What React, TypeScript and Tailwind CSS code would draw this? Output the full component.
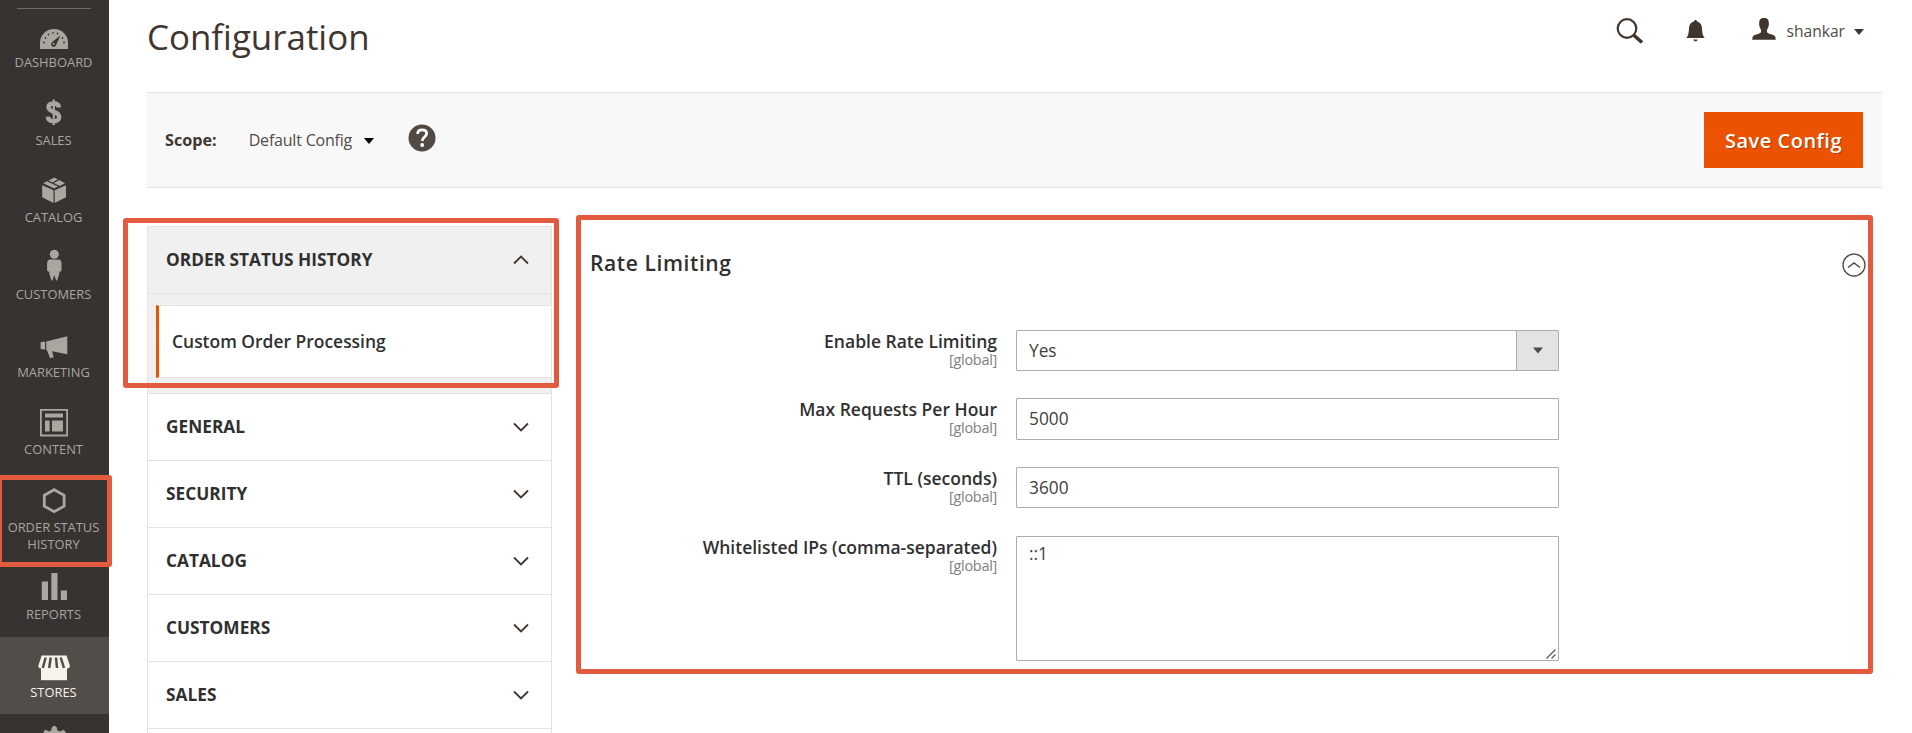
import type { ReactNode } from "react";

function Icon({ children }: { children: ReactNode }) {
  return (
    <svg viewBox="0 0 36 36" className="h-9 w-9 shrink-0" fill="currentColor">
      {children}
    </svg>
  );
}

const icons: Record<string, ReactNode> = {
  dashboard: (
    <Icon>
      <path d="M4 32V26a14 14 0 0 1 28 0v6z" />
      <g className="fill-[#373330]">
        <circle cx="8" cy="25.500" r="0.900" />
        <circle cx="9.500" cy="21" r="0.900" />
        <circle cx="12.500" cy="17.500" r="0.900" />
        <circle cx="17" cy="15.800" r="0.900" />
        <circle cx="21.500" cy="16.500" r="0.900" />
        <circle cx="26.500" cy="21" r="0.900" />
        <circle cx="28" cy="25.500" r="0.900" />
        <path d="M24.500 18.200L16 25.300a2.600 2.600 0 1 0 4.300 2.300z" />
      </g>
      <circle cx="17.700" cy="27" r="1" />
    </Icon>
  ),
  sales: (
    <Icon>
      <path
        d="M23 13.500c-.3-2.900-2.300-4-5.300-4-3 0-5.200 1.300-5.200 3.800 0 5.700 10.700 3.300 10.700 9.600 0 2.800-2.300 4.300-5.500 4.300-3.500 0-5.600-1.600-5.800-4.600"
        fill="none"
        stroke="currentColor"
        strokeWidth="4.400"
      />
      <path d="M16.700 5.500h2.200V31h-2.200z" />
    </Icon>
  ),
  catalog: (
    <Icon>
      <path d="M6.200 14.300l11.300 5v12.700l-11.300-5.700zM30 14.300l-11.300 5v12.700l11.300-5.700z" />
      <path d="M7.300 12.300l3.700-2 11 5.300-3.800 2zM12.500 9.500l5.700-3 3.700 1.700-5.400 3.300zM17.800 12.100l5.500-3.200 5.800 3.300-5.400 2.700z" />
    </Icon>
  ),
  customers: (
    <Icon>
      <circle cx="18.300" cy="5.200" r="4.500" />
      <path d="M14.300 10.500h8c2.200 0 3.200 1.500 3.200 4v7l-1.400 1.500-.8-1v3l-2.200 6.500h-1l-1.800-5.500-1.800 5.500h-1l-2.200-6.500v-3l-.8 1-1.400-1.500v-7c0-2.500 1-4 3.200-4z" />
    </Icon>
  ),
  marketing: (
    <Icon>
      <path d="M31.300 10.300v18l-15.200-3.100 1.500 6.100-3.500 1-3-7.900h-.8v-9zM9.100 15.600v8l-4.500-.6v-6.700z" />
    </Icon>
  ),
  content: (
    <Icon>
      <path d="M4 6h28v27.400H4zM5.800 7.800v23.800h24.400V7.800z" fillRule="evenodd" />
      <path d="M9 10.400h18v4.200H9zM9 17.500h4.600v11.100H9zM16 17.500h11v11.100H16z" />
    </Icon>
  ),
  order: (
    <Icon>
      <path
        d="M18.200 8.700l9.900 5.600v10.800l-9.900 5.600-9.900-5.600V14.300z"
        fill="none"
        stroke="currentColor"
        strokeWidth="2.800"
      />
    </Icon>
  ),
  reports: (
    <Icon>
      <path d="M5.800 13.500H12v18.500H5.800zM15.300 5h6.200v27h-6.200zM24.800 22.500H31v9.500h-6.200z" />
    </Icon>
  ),
  stores: (
    <Icon>
      <path d="M5 21.500h26v12.700H5z" />
      <path d="M5.700 9.500h24.800l3.300 10c.3 2-.8 3-2.800 3H5.200c-2 0-3.100-1-2.800-3z" />
      <path
        d="M9.700 11.500L6.800 22M14.700 11.500L13.200 22M20 11.500L21 22M24.700 11.500L28 22"
        className="stroke-[#524d49]"
        strokeWidth="2.500"
      />
    </Icon>
  ),
  gear: (
    <Icon>
      <path d="M15.800 4.500l1.500-1.500h2l1.500 1.500.7 3 2.500 1 3.500-1.700 2 2v3l-1 2 1 2 3.400 1.300v4H4.200v-4l3.400-1.300 1-2-1-2v-3l2-2 3.500 1.700 2-1z" />
    </Icon>
  ),
};

const menu = [
  { id: "dashboard", label: "DASHBOARD" },
  { id: "sales", label: "SALES" },
  { id: "catalog", label: "CATALOG" },
  { id: "customers", label: "CUSTOMERS" },
  { id: "marketing", label: "MARKETING" },
  { id: "content", label: "CONTENT" },
  { id: "order", label: "ORDER STATUS HISTORY" },
  { id: "reports", label: "REPORTS" },
  { id: "stores", label: "STORES" },
  { id: "gear", label: "" },
];

function itemStyle(id: string) {
  if (id === "stores") return "h-[77px] bg-[#524d49] text-[#f7f3eb]";
  if (id === "order") return "h-[87.500px] text-[#aaa6a0]";
  return "h-[77.400px] text-[#aaa6a0]";
}

function Sidebar() {
  return (
    <aside className="flex h-[733px] w-[109px] shrink-0 flex-col overflow-hidden bg-[#373330]">
      <div className="mt-[7.500px] -mb-px ml-[17px] h-px w-[74px] shrink-0 bg-[#736963]" />
      {menu.map((m) => (
        <div key={m.id} className={`flex shrink-0 flex-col items-center pt-[9px] pr-[2px] ${itemStyle(m.id)}`}>
          {icons[m.id]}
          <span className="mt-[1.800px] w-[104px] text-center text-[12.900px] leading-[17px]">{m.label}</span>
        </div>
      ))}
    </aside>
  );
}

function Caret({ className }: { className: string }) {
  return (
    <svg viewBox="0 0 10 6" className={className} fill="currentColor">
      <path d="M0 0h10L5 6z" />
    </svg>
  );
}

function Chevron({ up }: { up?: boolean }) {
  return (
    <svg viewBox="0 0 16 10" className="h-[10px] w-4" fill="none" stroke="#41362f" strokeWidth="1.800">
      <path d={up ? "M1 8.500l7-7 7 7" : "M1 1.500l7 7 7-7"} />
    </svg>
  );
}

function Header() {
  return (
    <header className="flex h-[92px] items-start justify-between">
      <h1 className="text-[34.900px] leading-[74px] text-[#41362f]">Configuration</h1>
      <div className="mr-[18px] flex h-[62px] items-center text-[#41362f]">
        <svg viewBox="0 0 27 26" className="h-[26px] w-[27px]" fill="none" stroke="currentColor">
          <circle cx="11" cy="10.500" r="9.300" strokeWidth="2.200" />
          <path d="M17.500 17l8.500 7.500" strokeWidth="3.600" />
        </svg>
        <svg viewBox="0 0 19 22" className="ml-[43px] h-[22px] w-[19px]" fill="currentColor">
          <path d="M9.500 0c1.200 0 1.500.8 1.600 1.500 3.400.8 4.700 3.500 4.900 7 .3 5 .8 7 2.700 9.500H.3c1.900-2.500 2.400-4.500 2.700-9.500.2-3.500 1.500-6.200 4.900-7C8 .8 8.300 0 9.500 0zM7.300 19.500h4.400c-.2 1.200-1 1.800-2.200 1.800s-2-.6-2.200-1.800z" />
        </svg>
        <svg viewBox="0 0 24 22" className="-mt-1 ml-[47px] h-[22px] w-6" fill="currentColor">
          <path d="M12 0c3.500 0 4.800 1.700 4.700 4.500l.3 1.500-.7 3-1.300 3v2c.5 1.300 1.500 1.500 4 2.200 3.800 1.100 4.700 1.800 4.700 5.600H.3c0-3.800.9-4.500 4.700-5.600 2.500-.7 3.500-.9 4-2.200v-2L7.700 9 7 6l.3-1.500C7.200 1.700 8.500 0 12 0z" />
        </svg>
        <span className="mt-px ml-[11px] text-[15.600px] text-[#524b46]">shankar</span>
        <Caret className="mt-px ml-[9px] h-[6px] w-[10px]" />
      </div>
    </header>
  );
}

function Toolbar() {
  return (
    <div className="flex h-24 items-center border-y border-[#e3e3e3] bg-[#f8f8f8] pr-[19px] pl-[18px]">
      <span className="text-[16.200px] font-bold text-[#41362f]">Scope:</span>
      <span className="ml-[32px] text-[16px] tracking-[-0.200px] text-[#524b46]">Default Config</span>
      <Caret className="mt-px ml-3 h-[6px] w-[10px] text-black" />
      <svg viewBox="0 0 28 28" className="-mt-1 ml-[34px] h-7 w-7">
        <circle cx="14" cy="14" r="13.500" fill="#514943" />
        <path d="M9.500 9.800c.3-2.800 2-4 4.500-4s4.600 1.300 4.600 3.800c0 3.600-4.400 3.300-4.400 7.400" fill="none" stroke="#fff" strokeWidth="2.800" />
        <circle cx="14.200" cy="21" r="1.900" fill="#fff" />
      </svg>
      <button className="ml-auto h-14 w-[159px] bg-[#eb5202] pt-px text-[20px] font-semibold tracking-[0.500px] text-white [text-shadow:1px_1px_0_rgba(0,0,0,0.25)]">
        Save Config
      </button>
    </div>
  );
}

function ConfigNav() {
  return (
    <nav className="h-[507px] w-[405px] shrink-0 overflow-hidden border-x border-t border-[#e3e3e3] text-[17.300px] text-[#303030]">
      <div className="flex h-[67px] items-center justify-between border-b border-[#e3e3e3] bg-[#f0f0f0] pr-[22px] pl-[18px] font-bold">
        ORDER STATUS HISTORY
        <Chevron up />
      </div>
      <div className="h-[100px] border-b border-[#e3e3e3] bg-[#f0f0f0] pt-[11px] pl-2">
        <div className="flex h-[73px] items-center border-y border-l-[3px] border-y-[#e3e3e3] border-l-[#eb5202] bg-white pl-[13px] text-[17.450px] font-semibold">
          Custom Order Processing
        </div>
      </div>
      {["GENERAL", "SECURITY", "CATALOG", "CUSTOMERS", "SALES", ""].map((t) => (
        <div key={t} className="flex h-[67px] items-center justify-between border-b border-[#e3e3e3] pr-[22px] pl-[18px] font-bold">
          {t}
          <Chevron />
        </div>
      ))}
    </nav>
  );
}

function Row({ label, children }: { label: string; children: ReactNode }) {
  return (
    <div className="flex">
      <div className="w-[409px] pt-[2px] text-right leading-[18px]">
        <div className="text-[17.500px] font-semibold text-[#303030]">{label}</div>
        <div className="mt-px text-[14.500px] leading-[17px] tracking-[-0.300px] text-[#808080]">[global]</div>
      </div>
      <div className="ml-[19px] w-[543px] text-[17.300px] text-[#41403e]">{children}</div>
    </div>
  );
}

function Fieldset() {
  return (
    <section className="ml-[36px] grow pt-[20px] pr-[16px]">
      <div className="flex h-[37px] items-center justify-between">
        <h2 className="-mt-[2px] ml-[2px] text-[21px] font-semibold tracking-[0.600px] text-[#303030]">Rate Limiting</h2>
        <svg viewBox="0 0 24 24" className="h-6 w-6" fill="none" stroke="#514943" strokeWidth="1.300">
          <circle cx="12" cy="12" r="11" />
          <path d="M6 14.500l6-4.500 6 4.500" strokeWidth="1.500" />
        </svg>
      </div>
      <div className="mt-[47px] grid grid-rows-[68px_69px_69px_125px]">
        <Row label="Enable Rate Limiting">
          <div className="flex h-[41px] items-center justify-between rounded-[1px] border border-[#adadad] pl-3">
            Yes
            <div className="flex h-full w-[42px] items-center justify-center border-l border-[#adadad] bg-[#e3e3e3] text-[#514943]">
              <Caret className="h-[7px] w-[10px]" />
            </div>
          </div>
        </Row>
        <Row label="Max Requests Per Hour">
          <div className="flex h-[42px] items-center rounded-[1px] border border-[#adadad] pl-3">5000</div>
        </Row>
        <Row label="TTL (seconds)">
          <div className="flex h-[41px] items-center rounded-[1px] border border-[#adadad] pl-3">3600</div>
        </Row>
        <Row label="Whitelisted IPs (comma-separated)">
          <div className="flex h-[125px] justify-between rounded-[1px] border border-[#adadad] pt-[5px] pr-[2px] pb-px pl-3 leading-[24px]">
            ::1
            <svg viewBox="0 0 10 10" className="h-[10px] w-[10px] self-end" stroke="#555" strokeWidth="1.200">
              <path d="M0.500 9.500l9-9M5.500 9.500l4-4" />
            </svg>
          </div>
        </Row>
      </div>
    </section>
  );
}

function Callout({ className }: { className: string }) {
  return (
    <div
      className={`pointer-events-none absolute rounded-[3px] border-[5px] border-[#e35b3e] ${className}`}
    />
  );
}

export default function App() {
  return (
    <div className="relative flex h-[733px] w-[1912px] overflow-hidden bg-white font-['Open_Sans',sans-serif]">
      <Sidebar />
      <main className="ml-[38px] w-[1735px]">
        <Header />
        <Toolbar />
        <div className="mt-[38px] flex">
          <ConfigNav />
          <Fieldset />
        </div>
      </main>
      <Callout className="top-[475px] left-[-3px] h-[92px] w-[115px]" />
      <Callout className="top-[218px] left-[123px] h-[170px] w-[436px]" />
      <Callout className="top-[215px] left-[576px] h-[459px] w-[1297px]" />
    </div>
  );
}
